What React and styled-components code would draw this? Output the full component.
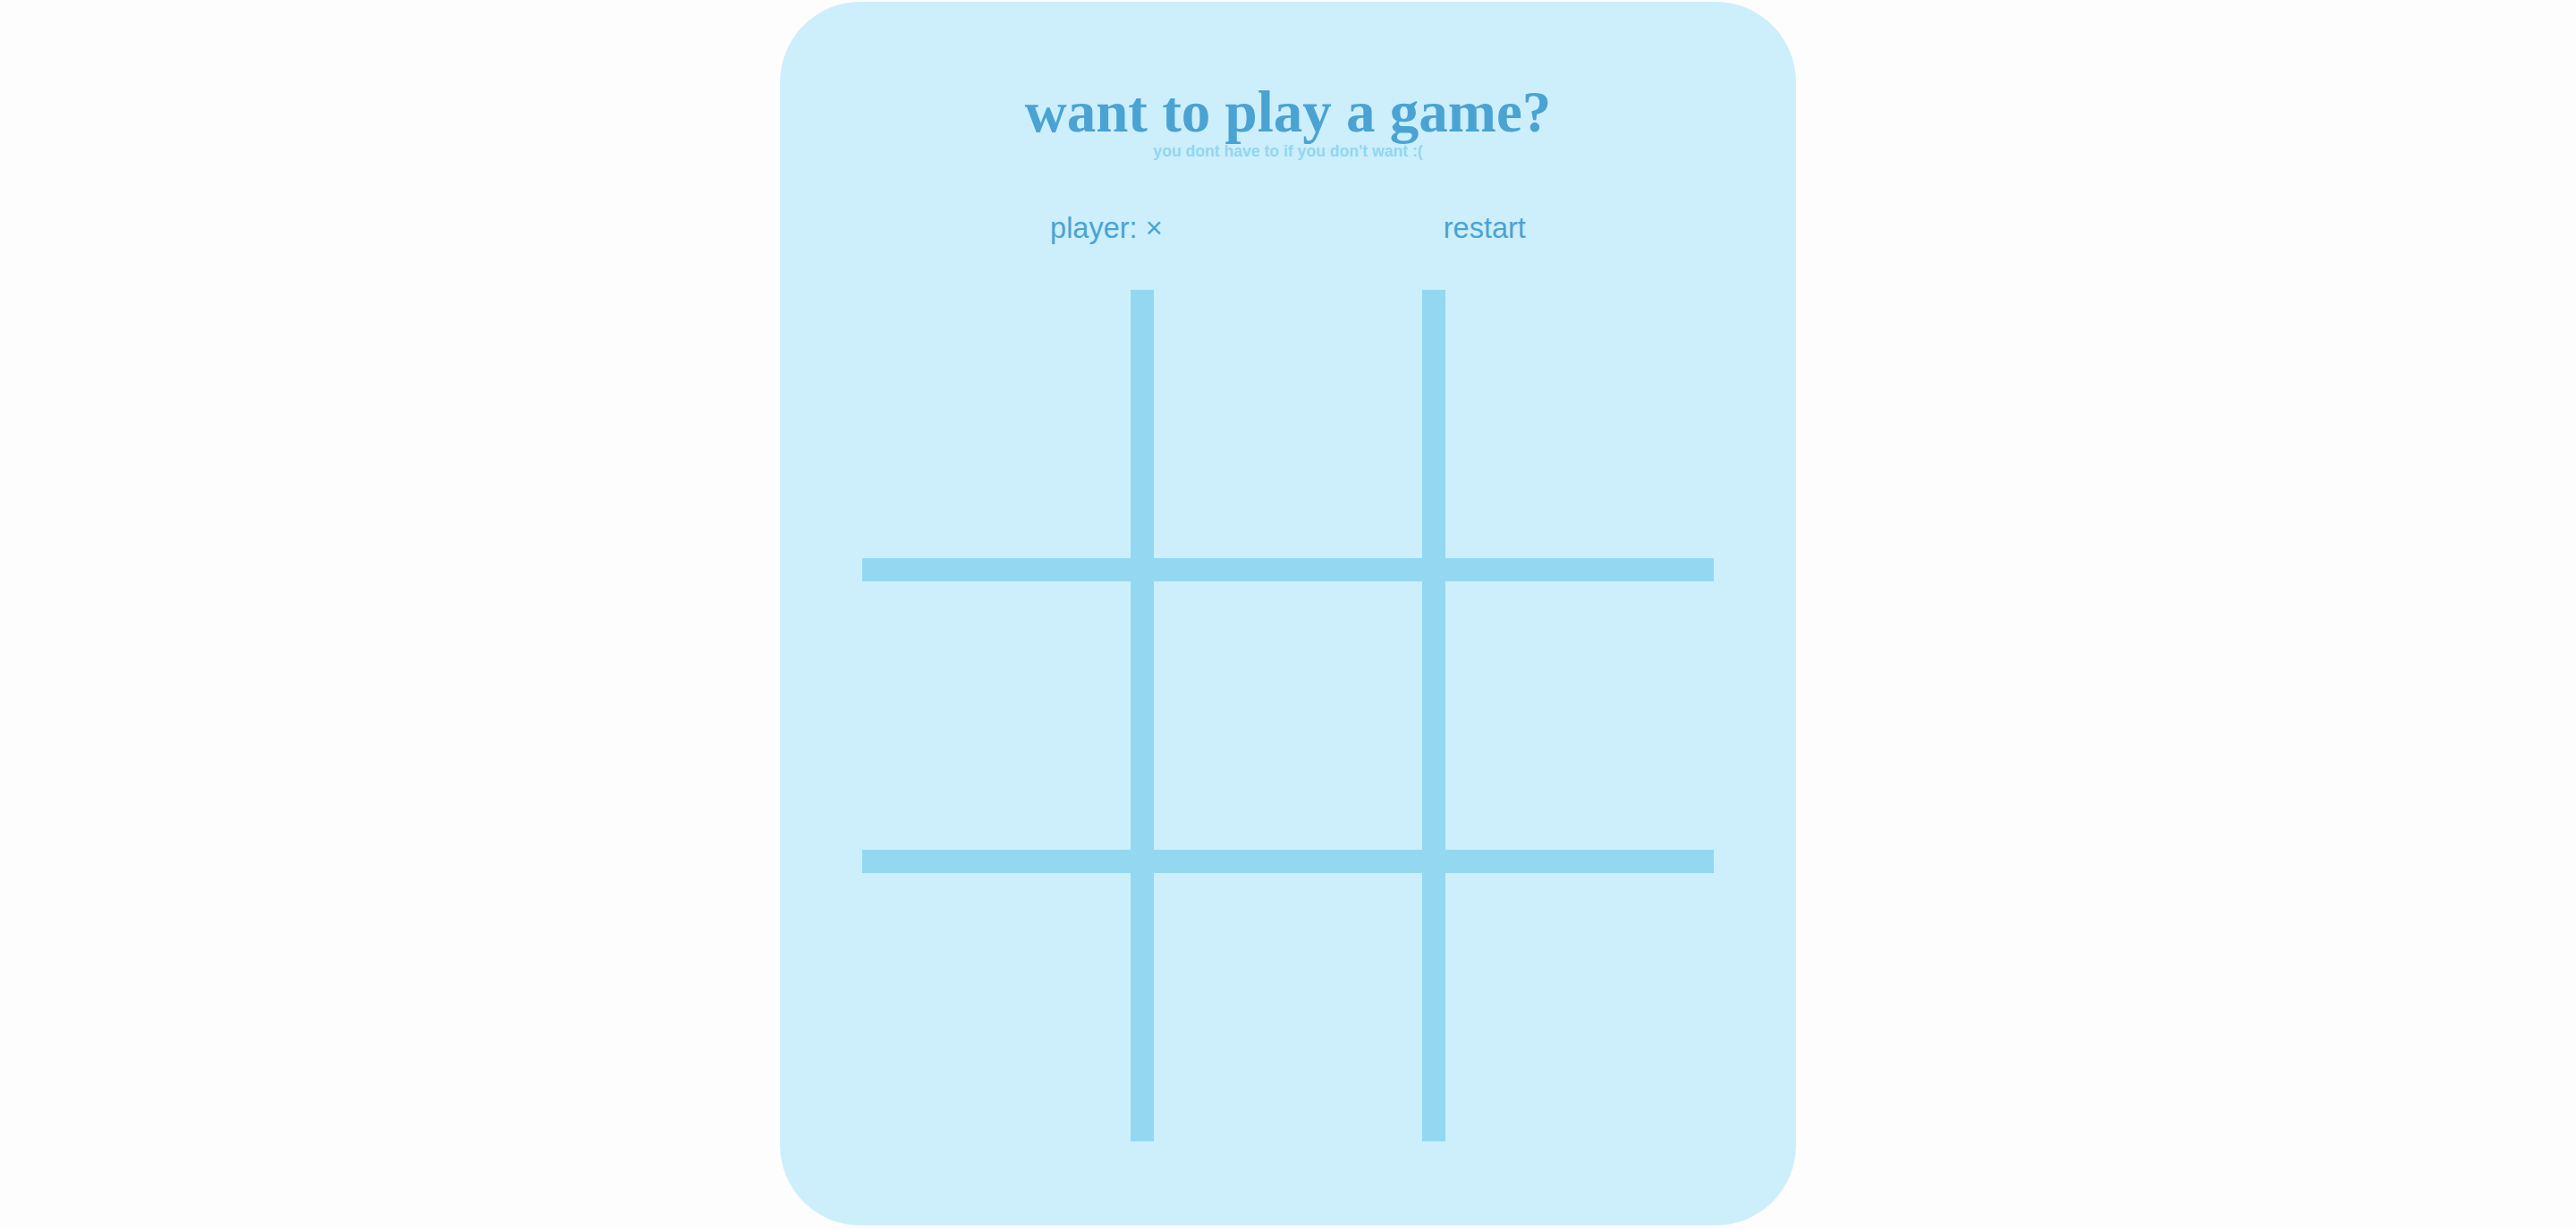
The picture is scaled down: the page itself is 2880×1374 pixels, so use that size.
import React, {useState} from 'react';
import styled, {createGlobalStyle} from 'styled-components';

const GlobalStyle = createGlobalStyle`
    html, body {
        margin: 0;
        padding: 0;
        background: #fdfdfd;
    }
`

const Page = styled.div`
    display: flex;
    justify-content: center;
    padding-top: 2px;
    min-height: 1372px;
`

const Card = styled.div`
    width: 1136px;
    height: 1368px;
    box-sizing: border-box;
    padding: 91px 0 0;
    border-radius: 90px;
    background: #cceffb;
    display: flex;
    flex-direction: column;
    align-items: center;
`

const Title = styled.h1`
    margin: 0;
    font-family: "Liberation Serif", "Times New Roman", serif;
    font-weight: 700;
    font-size: 65px;
    line-height: 65px;
    color: #4aa3d2;
`

const Subtitle = styled.p`
    margin: 3px 0 0;
    font-family: "Liberation Sans", Arial, sans-serif;
    font-weight: 700;
    font-size: 17.6px;
    line-height: 17.6px;
    color: #93d6f0;
`

const Controls = styled.div`
    width: 846px;
    margin-top: 60px;
    display: flex;
    justify-content: space-around;
    font-family: "Liberation Sans", Arial, sans-serif;
    font-size: 32.5px;
    line-height: 32px;
    color: #4aa3d2;
`

const Player = styled.span``

const RestartButton = styled.button`
    padding: 0;
    border: none;
    background: none;
    font: inherit;
    line-height: inherit;
    color: inherit;
    cursor: pointer;
`

const Board = styled.div`
    margin-top: 53px;
    display: grid;
    grid-template-columns: repeat(3, 300px);
    grid-template-rows: repeat(3, 300px);
    gap: 26px;
    background: #93d8f0;
`

const Cell = styled.div`
    background: #cceffb;
    display: flex;
    align-items: center;
    justify-content: center;
    font-family: "Liberation Sans", Arial, sans-serif;
    font-size: 180px;
    color: #4aa3d2;
    cursor: pointer;
`

export default function App() {
    const [cells, setCells] = useState(Array(9).fill(''))
    const [player, setPlayer] = useState('×')

    const play = (i) => {
        if (cells[i]) return
        const next = [...cells]
        next[i] = player
        setCells(next)
        setPlayer(player === '×' ? '○' : '×')
    }

    const restart = () => {
        setCells(Array(9).fill(''))
        setPlayer('×')
    }

    return (
        <Page>
            <GlobalStyle/>
            <Card>
                <Title>want to play a game?</Title>
                <Subtitle>you dont have to if you don't want :(</Subtitle>
                <Controls>
                    <Player>player: {player}</Player>
                    <RestartButton onClick={restart}>restart</RestartButton>
                </Controls>
                <Board>
                    {cells.map((c, i) => <Cell key={i} onClick={() => play(i)}>{c}</Cell>)}
                </Board>
            </Card>
        </Page>
    );
}
